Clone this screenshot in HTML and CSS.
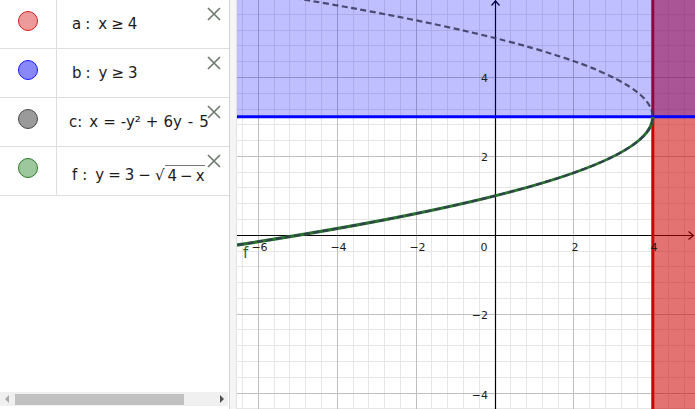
FILE: index.html
```html
<!DOCTYPE html>
<html lang="en">
<head>
<meta charset="utf-8">
<title>Graphing</title>
<link rel="stylesheet" href="styles.css">
</head>
<body>
<div class="app">
  <aside class="algebra">
    <div class="item">
      <div class="marble"><span class="dot dot-a"></span></div>
      <div class="expr"><span>a</span><span class="colon">:</span><span>x</span><span class="rel">≥</span><span>4</span></div>
      <svg class="close" viewBox="0 0 14 14"><path d="M1 1L13 13M13 1L1 13"/></svg>
    </div>
    <div class="item">
      <div class="marble"><span class="dot dot-b"></span></div>
      <div class="expr"><span>b</span><span class="colon">:</span><span>y</span><span class="rel">≥</span><span>3</span></div>
      <svg class="close" viewBox="0 0 14 14"><path d="M1 1L13 13M13 1L1 13"/></svg>
    </div>
    <div class="item">
      <div class="marble"><span class="dot dot-c"></span></div>
      <div class="expr expr-c"><span>c:</span><span class="sp">x</span><span class="rel">=</span><span>-y²</span><span class="rel">+</span><span>6y</span><span class="gap">-</span><span>5</span></div>
      <svg class="close" viewBox="0 0 14 14"><path d="M1 1L13 13M13 1L1 13"/></svg>
    </div>
    <div class="item">
      <div class="marble"><span class="dot dot-f"></span></div>
      <div class="expr expr-f"><span>f</span><span class="colon">:</span><span>y</span><span class="rel">=</span><span>3</span><span class="rel">−</span><span class="root">√</span><span class="radicand">4<span class="inner">−</span>x</span></div>
      <svg class="close" viewBox="0 0 14 14"><path d="M1 1L13 13M13 1L1 13"/></svg>
    </div>
    <div class="spacer"></div>
    <div class="hscroll">
      <span class="arrow arrow-left"></span>
      <span class="thumb"></span>
      <span class="arrow arrow-right"></span>
    </div>
  </aside>
  <div class="splitter"></div>
  <main class="graphics">
    <svg class="plot" width="458" height="409" viewBox="0 0 458 409">
      <path class="grid-minor" d="M5.5 0V409M37.5 0V409M52.5 0V409M68.5 0V409M84.5 0V409M116.5 0V409M131.5 0V409M147.5 0V409M163.5 0V409M194.5 0V409M210.5 0V409M226.5 0V409M242.5 0V409M273.5 0V409M289.5 0V409M305.5 0V409M321.5 0V409M352.5 0V409M368.5 0V409M384.5 0V409M400.5 0V409M431.5 0V409M447.5 0V409M0 14.5H458M0 30.5H458M0 45.5H458M0 61.5H458M0 93.5H458M0 109.5H458M0 124.5H458M0 140.5H458M0 172.5H458M0 187.5H458M0 203.5H458M0 219.5H458M0 251.5H458M0 266.5H458M0 282.5H458M0 298.5H458M0 329.5H458M0 345.5H458M0 361.5H458M0 377.5H458M0 408.5H458"/>
      <path class="grid-major" d="M21.5 0V409M100.5 0V409M179.5 0V409M336.5 0V409M415.5 0V409M0 77.5H458M0 156.5H458M0 314.5H458M0 393.5H458"/>
      <path class="axis" d="M258.5 0V409M0 235.5H457"/>
      <path class="axis" d="M254.5 5.5L258.5 1L262.5 5.5M451.5 231.5L456.5 235.5L451.5 239.5"/>
      <rect class="fill-a" x="415.8" y="0" width="43" height="409"/>
      <path class="line-a" d="M415.8 0V409"/>
      <rect class="fill-b" x="0" y="0" width="458" height="116.8"/>
      <path class="line-b" d="M0 116.8H458"/>
      <path class="curve-f" d="M-215.4 274.75Q415.8 195.85 415.8 116.95"/>
      <path class="curve-c" d="M-215.4 274.75Q415.8 195.85 415.8 116.95Q415.8 55.8 36.7 -5.3"/>
      <g class="ticks">
        <text x="251" y="82" text-anchor="end">4</text>
        <text x="251" y="161" text-anchor="end">2</text>
        <text x="251" y="319" text-anchor="end">−2</text>
        <text x="251" y="398.5" text-anchor="end">−4</text>
        <text x="22.5" y="251" text-anchor="middle">−6</text>
        <text x="101.5" y="251" text-anchor="middle">−4</text>
        <text x="180.5" y="251" text-anchor="middle">−2</text>
        <text x="247" y="251" text-anchor="middle">0</text>
        <text x="338" y="251" text-anchor="middle">2</text>
        <text x="417" y="251" text-anchor="middle">4</text>
      </g>
      <text class="label-f" x="6" y="258">f</text>
    </svg>
  </main>
</div>
</body>
</html>
```
FILE: styles.css
```css
* { box-sizing: border-box; }
html, body { margin: 0; padding: 0; background: #fff; }
body { font-family: "DejaVu Sans", "Liberation Sans", sans-serif; }

.app {
  display: flex;
  width: 695px;
  height: 409px;
  overflow: hidden;
}

.algebra {
  width: 230px;
  flex: none;
  display: flex;
  flex-direction: column;
  border-right: 1px solid #d4d4d4;
  background: #fff;
}

.item {
  position: relative;
  display: flex;
  height: 49px;
  border-bottom: 1px solid #dedede;
}

.marble {
  width: 57px;
  flex: none;
  border-right: 1px solid #dedede;
  display: flex;
  justify-content: center;
  align-items: flex-start;
  padding-top: 11px;
}

.dot {
  display: block;
  width: 20px;
  height: 20px;
  border-radius: 50%;
  border: 1px solid;
}
.dot-a { background: #ec9a9a; border-color: #d21f1f; }
.dot-b { background: #8888f8; border-color: #1a1aff; }
.dot-c { background: #9a9a9a; border-color: #4a4a4a; }
.dot-f { background: #9dc89d; border-color: #2a7a2a; }

.expr {
  display: flex;
  align-items: center;
  padding-left: 15px;
  font-size: 15px;
  color: #1c1c1c;
  white-space: nowrap;
}
.expr .colon { margin: 0 8px 0 4px; }
.expr .rel { margin: 0 4px; }
.expr-c { padding-left: 12px; }
.expr-c .sp { margin-left: 7px; }
.expr-c .rel { margin: 0 5px; }
.expr-c .gap { margin: 0 6px; }
.expr-f { padding-top: 8px; }
.expr-f .colon { margin: 0 8px 0 5px; }
.root { margin-left: 0; }
.radicand {
  border-top: 1px solid #777;
  padding: 1px 0 0 3px;
  margin-top: -1px;
}
.inner { margin: 0 3px; }

.close {
  position: absolute;
  top: 7px;
  right: 8px;
  width: 14px;
  height: 14px;
}
.close path {
  fill: none;
  stroke: #6f7b6f;
  stroke-width: 1.7;
}

.spacer { flex: 1; }

.hscroll {
  display: flex;
  align-items: center;
  height: 14px;
  margin-bottom: 3px;
  margin-right: 1px;
  background: #f0f0f0;
}
.arrow {
  width: 0;
  height: 0;
  border-top: 4px solid transparent;
  border-bottom: 4px solid transparent;
}
.arrow-left {
  margin-left: 5px;
  border-right: 4px solid #a8a8a8;
}
.arrow-right {
  margin-left: auto;
  margin-right: 4px;
  border-left: 4px solid #505050;
}
.thumb {
  width: 169px;
  height: 11px;
  margin-left: 6px;
  margin-top: 1px;
  background: #c1c1c1;
}

.splitter {
  width: 7px;
  flex: none;
  background: #f5f5f5;
  border-right: 1px solid #e2e2e2;
}

.graphics {
  flex: 1;
  position: relative;
  overflow: hidden;
}
.plot { display: block; }

.grid-minor { stroke: #e6e6e6; stroke-width: 1; fill: none; }
.grid-major { stroke: #c0c0c0; stroke-width: 1; fill: none; }
.axis { stroke: #000; stroke-width: 1.2; fill: none; }

.fill-a { fill: rgba(204, 0, 0, 0.55); }
.line-a { stroke: #cc0000; stroke-width: 3; fill: none; }
.fill-b { fill: rgba(0, 0, 255, 0.25); }
.line-b { stroke: #0000ff; stroke-width: 3; fill: none; }

.curve-f { stroke: #26762a; stroke-width: 3.4; fill: none; }
.curve-c {
  stroke: #363658;
  stroke-width: 2.2;
  fill: none;
  stroke-dasharray: 6 3.5;
  opacity: 0.85;
}

.ticks text {
  font-family: "DejaVu Sans", "Liberation Sans", sans-serif;
  font-size: 11px;
  fill: #1a1a1a;
}
.label-f {
  font-family: "DejaVu Sans", "Liberation Sans", sans-serif;
  font-size: 15px;
  fill: #1f6a1f;
}
```
